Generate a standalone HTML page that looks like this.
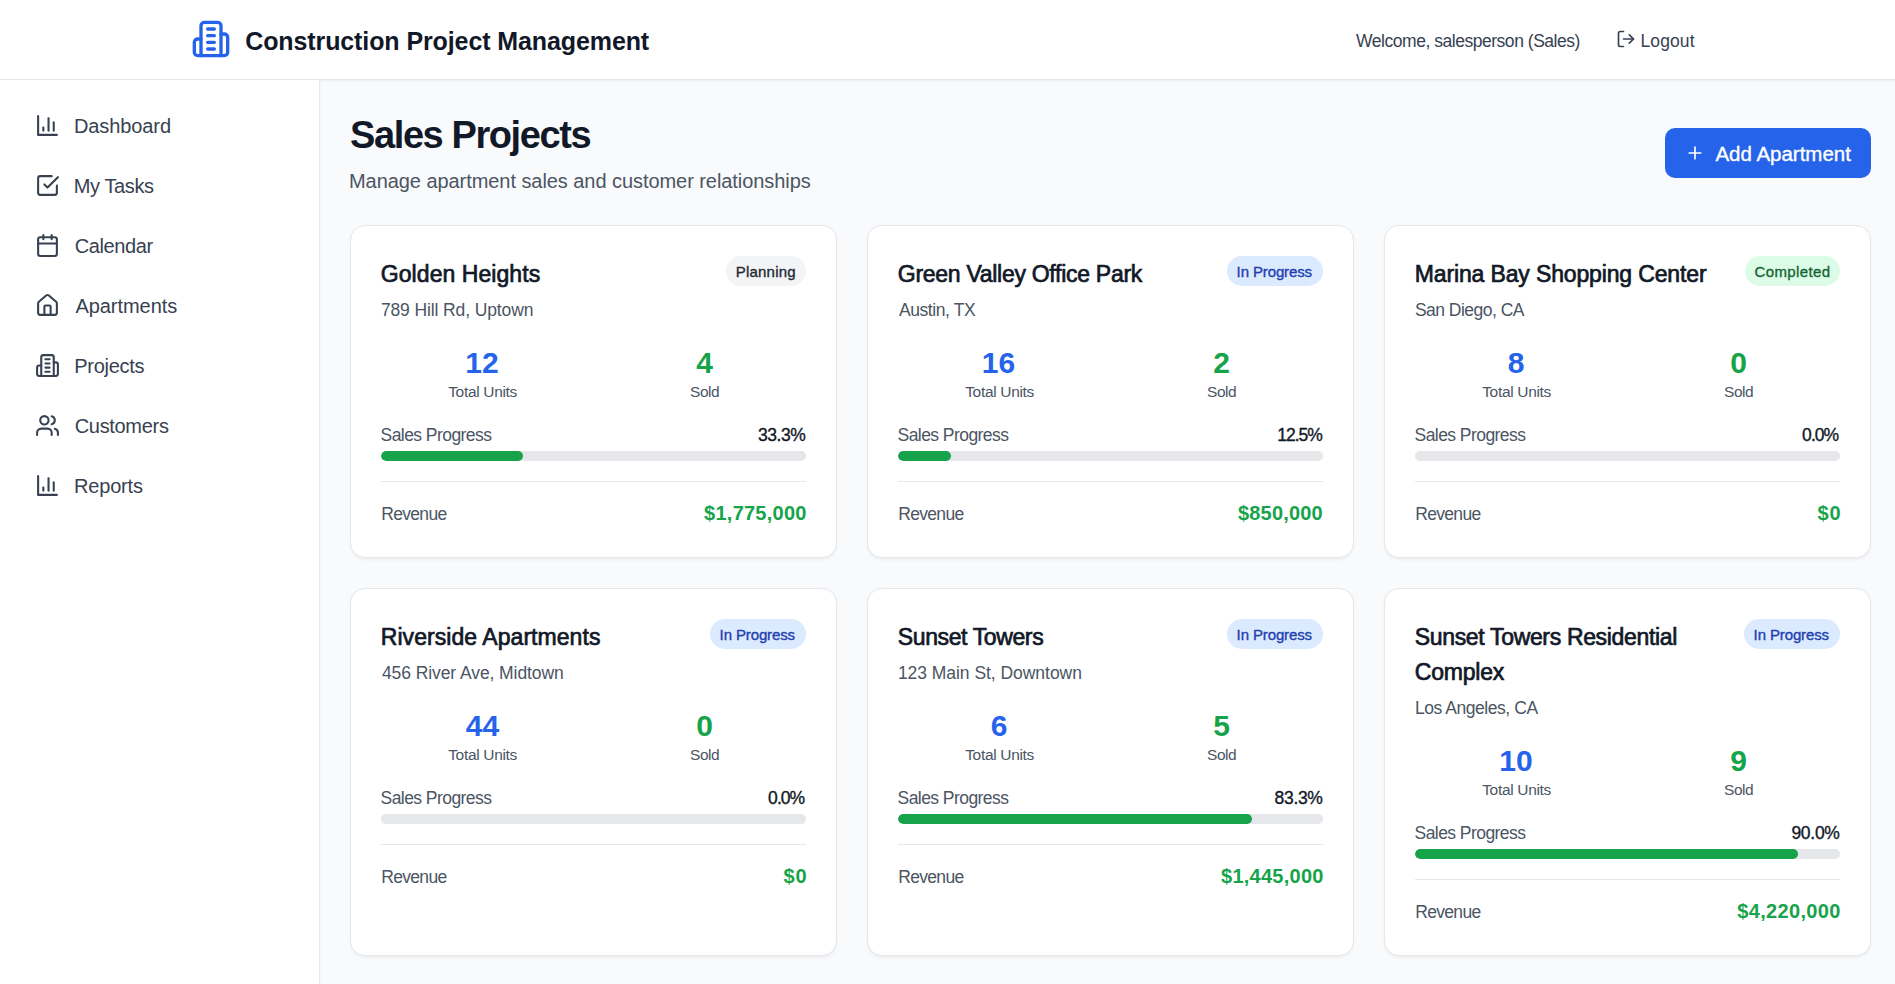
<!DOCTYPE html>
<html><head><meta charset="utf-8"><title>Sales Projects</title>
<style>
*{box-sizing:border-box;margin:0;padding:0}
html,body{width:1895px;height:984px;overflow:hidden;background:#f9fafb;font-family:'Liberation Sans', sans-serif}
.t{position:absolute;white-space:nowrap}
.ic{position:absolute;display:block;overflow:visible}
.b{position:absolute}
</style></head><body>
<div class="b" style="left:0;top:0;width:1895px;height:80px;background:#fff;border-bottom:1px solid #e5e7eb;box-shadow:0 1.25px 2.5px rgba(0,0,0,0.05)"></div>
<div class="b" style="left:0;top:80px;width:320px;height:904px;background:#fff;border-right:1px solid #e5e7eb;box-shadow:0 1.25px 2.5px rgba(0,0,0,0.05)"></div>
<svg class="ic" style="left:190.6px;top:19px;width:40px;height:40px" viewBox="0 0 24 24" fill="none" stroke="#2563eb" stroke-width="2" stroke-linecap="round" stroke-linejoin="round"><path d="M6 22V4a2 2 0 0 1 2-2h8a2 2 0 0 1 2 2v18Z"/><path d="M6 12H4a2 2 0 0 0-2 2v6a2 2 0 0 0 2 2h2"/><path d="M18 9h2a2 2 0 0 1 2 2v9a2 2 0 0 1-2 2h-2"/><path d="M10 6h4"/><path d="M10 10h4"/><path d="M10 14h4"/><path d="M10 18h4"/></svg>
<div class="t" style="left:245.20px;top:29.00px;font-size:25px;line-height:25px;font-weight:700;color:#111827;letter-spacing:-0.100px;">Construction Project Management</div>
<div class="t" style="left:1356.10px;top:33.00px;font-size:17.5px;line-height:17.5px;font-weight:400;color:#374151;letter-spacing:-0.470px;">Welcome, salesperson (Sales)</div>
<svg class="ic" style="left:1616px;top:29px;width:20px;height:20px" viewBox="0 0 24 24" fill="none" stroke="#374151" stroke-width="2" stroke-linecap="round" stroke-linejoin="round"><path d="M9 21H5a2 2 0 0 1-2-2V5a2 2 0 0 1 2-2h4"/><polyline points="16 17 21 12 16 7"/><line x1="21" x2="9" y1="12" y2="12"/></svg>
<div class="t" style="left:1640.50px;top:33.00px;font-size:17.5px;line-height:17.5px;font-weight:400;color:#374151;letter-spacing:0.100px;">Logout</div>
<svg class="ic" style="left:35px;top:113px;width:25px;height:25px" viewBox="0 0 24 24" fill="none" stroke="#374151" stroke-width="2" stroke-linecap="round" stroke-linejoin="round"><path d="M3 3v18h18"/><path d="M18 17V9"/><path d="M13 17V5"/><path d="M8 17v-3"/></svg>
<div class="t" style="left:74.00px;top:116.00px;font-size:20px;line-height:20px;font-weight:400;color:#374151;letter-spacing:-0.100px;">Dashboard</div>
<svg class="ic" style="left:35px;top:173px;width:25px;height:25px" viewBox="0 0 24 24" fill="none" stroke="#374151" stroke-width="2" stroke-linecap="round" stroke-linejoin="round"><polyline points="9 11 12 14 22 4"/><path d="M21 12v7a2 2 0 0 1-2 2H5a2 2 0 0 1-2-2V5a2 2 0 0 1 2-2h11"/></svg>
<div class="t" style="left:73.80px;top:176.00px;font-size:20px;line-height:20px;font-weight:400;color:#374151;letter-spacing:-0.400px;">My Tasks</div>
<svg class="ic" style="left:35px;top:233px;width:25px;height:25px" viewBox="0 0 24 24" fill="none" stroke="#374151" stroke-width="2" stroke-linecap="round" stroke-linejoin="round"><rect width="18" height="18" x="3" y="4" rx="2" ry="2"/><line x1="16" x2="16" y1="2" y2="6"/><line x1="8" x2="8" y1="2" y2="6"/><line x1="3" x2="21" y1="10" y2="10"/></svg>
<div class="t" style="left:74.80px;top:236.00px;font-size:20px;line-height:20px;font-weight:400;color:#374151;letter-spacing:-0.400px;">Calendar</div>
<svg class="ic" style="left:35px;top:293px;width:25px;height:25px" viewBox="0 0 24 24" fill="none" stroke="#374151" stroke-width="2" stroke-linecap="round" stroke-linejoin="round"><path d="M15 21v-8a1 1 0 0 0-1-1h-4a1 1 0 0 0-1 1v8"/><path d="M3 10a2 2 0 0 1 .709-1.528l7-5.999a2 2 0 0 1 2.582 0l7 5.999A2 2 0 0 1 21 10v9a2 2 0 0 1-2 2H5a2 2 0 0 1-2-2z"/></svg>
<div class="t" style="left:75.40px;top:296.00px;font-size:20px;line-height:20px;font-weight:400;color:#374151;letter-spacing:-0.044px;">Apartments</div>
<svg class="ic" style="left:35px;top:353px;width:25px;height:25px" viewBox="0 0 24 24" fill="none" stroke="#374151" stroke-width="2" stroke-linecap="round" stroke-linejoin="round"><path d="M6 22V4a2 2 0 0 1 2-2h8a2 2 0 0 1 2 2v18Z"/><path d="M6 12H4a2 2 0 0 0-2 2v6a2 2 0 0 0 2 2h2"/><path d="M18 9h2a2 2 0 0 1 2 2v9a2 2 0 0 1-2 2h-2"/><path d="M10 6h4"/><path d="M10 10h4"/><path d="M10 14h4"/><path d="M10 18h4"/></svg>
<div class="t" style="left:74.30px;top:356.00px;font-size:20px;line-height:20px;font-weight:400;color:#374151;letter-spacing:-0.286px;">Projects</div>
<svg class="ic" style="left:35px;top:413px;width:25px;height:25px" viewBox="0 0 24 24" fill="none" stroke="#374151" stroke-width="2" stroke-linecap="round" stroke-linejoin="round"><path d="M16 21v-2a4 4 0 0 0-4-4H6a4 4 0 0 0-4 4v2"/><circle cx="9" cy="7" r="4"/><path d="M22 21v-2a4 4 0 0 0-3-3.87"/><path d="M16 3.13a4 4 0 0 1 0 7.75"/></svg>
<div class="t" style="left:74.70px;top:416.00px;font-size:20px;line-height:20px;font-weight:400;color:#374151;letter-spacing:-0.312px;">Customers</div>
<svg class="ic" style="left:35px;top:473px;width:25px;height:25px" viewBox="0 0 24 24" fill="none" stroke="#374151" stroke-width="2" stroke-linecap="round" stroke-linejoin="round"><path d="M3 3v18h18"/><path d="M18 17V9"/><path d="M13 17V5"/><path d="M8 17v-3"/></svg>
<div class="t" style="left:74.00px;top:476.00px;font-size:20px;line-height:20px;font-weight:400;color:#374151;letter-spacing:-0.183px;">Reports</div>
<div class="t" style="left:350.10px;top:116.00px;font-size:38px;line-height:38px;font-weight:700;color:#111827;letter-spacing:-1.415px;">Sales Projects</div>
<div class="t" style="left:349.00px;top:171.00px;font-size:20px;line-height:20px;font-weight:400;color:#4b5563;letter-spacing:-0.060px;">Manage apartment sales and customer relationships</div>
<div class="b" style="left:1665px;top:128px;width:206px;height:50px;background:#2563eb;border-radius:10px"></div>
<svg class="ic" style="left:1685px;top:143px;width:20px;height:20px" viewBox="0 0 24 24" fill="none" stroke="#ffffff" stroke-width="2" stroke-linecap="round" stroke-linejoin="round"><path d="M5 12h14"/><path d="M12 5v14"/></svg>
<div class="t" style="left:1715.40px;top:144.00px;font-size:20.5px;line-height:20.5px;font-weight:400;color:#ffffff;letter-spacing:-0.008px;-webkit-text-stroke:0.35px #ffffff;">Add Apartment</div>
<div class="b" style="left:350px;top:225px;width:487px;height:333px;background:#fff;border:1px solid #e5e7eb;border-radius:15px;box-shadow:0 1.25px 2.5px rgba(0,0,0,0.05)"></div>
<div class="t" style="left:380.80px;top:263.00px;font-size:23px;line-height:23px;font-weight:400;color:#111827;letter-spacing:0.062px;-webkit-text-stroke:0.7px #111827;">Golden Heights</div>
<div class="b" style="left:726px;top:256px;width:80px;height:30px;background:#f3f4f6;border-radius:15px"></div>
<div class="t" style="left:735.85px;top:264.00px;font-size:15px;line-height:15px;font-weight:400;color:#1f2937;letter-spacing:0.186px;-webkit-text-stroke:0.35px #1f2937;">Planning</div>
<div class="t" style="left:380.90px;top:302.00px;font-size:17.5px;line-height:17.5px;font-weight:400;color:#4b5563;letter-spacing:-0.117px;">789 Hill Rd, Uptown</div>
<div class="t" style="left:465.25px;top:348.00px;font-size:30px;line-height:30px;font-weight:700;color:#2563eb;">12</div>
<div class="t" style="left:696.25px;top:348.00px;font-size:30px;line-height:30px;font-weight:700;color:#16a34a;">4</div>
<div class="t" style="left:448.20px;top:384.00px;font-size:15.5px;line-height:15.5px;font-weight:400;color:#4b5563;letter-spacing:-0.320px;">Total Units</div>
<div class="t" style="left:690.05px;top:384.00px;font-size:15.5px;line-height:15.5px;font-weight:400;color:#4b5563;letter-spacing:-0.500px;">Sold</div>
<div class="t" style="left:380.60px;top:427.00px;font-size:17.5px;line-height:17.5px;font-weight:400;color:#4b5563;letter-spacing:-0.562px;">Sales Progress</div>
<div class="t" style="left:758.00px;top:427.00px;font-size:17.5px;line-height:17.5px;font-weight:400;color:#111827;letter-spacing:-0.425px;-webkit-text-stroke:0.35px #111827;">33.3%</div>
<div class="b" style="left:381px;top:451px;width:425px;height:10px;background:#e5e7eb;border-radius:5px;overflow:hidden"><div style="width:33.3%;height:10px;background:#16a34a;border-radius:5px"></div></div>
<div class="b" style="left:381px;top:481px;width:425px;height:1px;background:#e5e7eb"></div>
<div class="t" style="left:381.20px;top:506.00px;font-size:17.5px;line-height:17.5px;font-weight:400;color:#4b5563;letter-spacing:-0.667px;">Revenue</div>
<div class="t" style="left:704.10px;top:503.00px;font-size:20px;line-height:20px;font-weight:700;color:#16a34a;letter-spacing:0.244px;">$1,775,000</div>
<div class="b" style="left:867px;top:225px;width:487px;height:333px;background:#fff;border:1px solid #e5e7eb;border-radius:15px;box-shadow:0 1.25px 2.5px rgba(0,0,0,0.05)"></div>
<div class="t" style="left:897.80px;top:263.00px;font-size:23px;line-height:23px;font-weight:400;color:#111827;letter-spacing:-0.283px;-webkit-text-stroke:0.7px #111827;">Green Valley Office Park</div>
<div class="b" style="left:1227px;top:256px;width:96px;height:30px;background:#dbeafe;border-radius:15px"></div>
<div class="t" style="left:1236.60px;top:264.00px;font-size:15px;line-height:15px;font-weight:400;color:#1e40af;letter-spacing:-0.120px;-webkit-text-stroke:0.35px #1e40af;">In Progress</div>
<div class="t" style="left:898.90px;top:302.00px;font-size:17.5px;line-height:17.5px;font-weight:400;color:#4b5563;letter-spacing:-0.411px;">Austin, TX</div>
<div class="t" style="left:981.75px;top:348.00px;font-size:30px;line-height:30px;font-weight:700;color:#2563eb;">16</div>
<div class="t" style="left:1213.25px;top:348.00px;font-size:30px;line-height:30px;font-weight:700;color:#16a34a;">2</div>
<div class="t" style="left:965.20px;top:384.00px;font-size:15.5px;line-height:15.5px;font-weight:400;color:#4b5563;letter-spacing:-0.320px;">Total Units</div>
<div class="t" style="left:1207.05px;top:384.00px;font-size:15.5px;line-height:15.5px;font-weight:400;color:#4b5563;letter-spacing:-0.500px;">Sold</div>
<div class="t" style="left:897.60px;top:427.00px;font-size:17.5px;line-height:17.5px;font-weight:400;color:#4b5563;letter-spacing:-0.562px;">Sales Progress</div>
<div class="t" style="left:1277.30px;top:427.00px;font-size:17.5px;line-height:17.5px;font-weight:400;color:#111827;letter-spacing:-1.000px;-webkit-text-stroke:0.35px #111827;">12.5%</div>
<div class="b" style="left:898px;top:451px;width:425px;height:10px;background:#e5e7eb;border-radius:5px;overflow:hidden"><div style="width:12.5%;height:10px;background:#16a34a;border-radius:5px"></div></div>
<div class="b" style="left:898px;top:481px;width:425px;height:1px;background:#e5e7eb"></div>
<div class="t" style="left:898.20px;top:506.00px;font-size:17.5px;line-height:17.5px;font-weight:400;color:#4b5563;letter-spacing:-0.667px;">Revenue</div>
<div class="t" style="left:1238.00px;top:503.00px;font-size:20px;line-height:20px;font-weight:700;color:#16a34a;letter-spacing:0.186px;">$850,000</div>
<div class="b" style="left:1384px;top:225px;width:487px;height:333px;background:#fff;border:1px solid #e5e7eb;border-radius:15px;box-shadow:0 1.25px 2.5px rgba(0,0,0,0.05)"></div>
<div class="t" style="left:1414.80px;top:263.00px;font-size:23px;line-height:23px;font-weight:400;color:#111827;letter-spacing:-0.144px;-webkit-text-stroke:0.7px #111827;">Marina Bay Shopping Center</div>
<div class="b" style="left:1745px;top:256px;width:95px;height:30px;background:#dcfce7;border-radius:15px"></div>
<div class="t" style="left:1754.45px;top:264.00px;font-size:15px;line-height:15px;font-weight:400;color:#166534;letter-spacing:0.387px;-webkit-text-stroke:0.35px #166534;">Completed</div>
<div class="t" style="left:1414.90px;top:302.00px;font-size:17.5px;line-height:17.5px;font-weight:400;color:#4b5563;letter-spacing:-0.517px;">San Diego, CA</div>
<div class="t" style="left:1507.75px;top:348.00px;font-size:30px;line-height:30px;font-weight:700;color:#2563eb;">8</div>
<div class="t" style="left:1730.25px;top:348.00px;font-size:30px;line-height:30px;font-weight:700;color:#16a34a;">0</div>
<div class="t" style="left:1482.20px;top:384.00px;font-size:15.5px;line-height:15.5px;font-weight:400;color:#4b5563;letter-spacing:-0.320px;">Total Units</div>
<div class="t" style="left:1724.05px;top:384.00px;font-size:15.5px;line-height:15.5px;font-weight:400;color:#4b5563;letter-spacing:-0.500px;">Sold</div>
<div class="t" style="left:1414.60px;top:427.00px;font-size:17.5px;line-height:17.5px;font-weight:400;color:#4b5563;letter-spacing:-0.562px;">Sales Progress</div>
<div class="t" style="left:1802.10px;top:427.00px;font-size:17.5px;line-height:17.5px;font-weight:400;color:#111827;letter-spacing:-0.933px;-webkit-text-stroke:0.35px #111827;">0.0%</div>
<div class="b" style="left:1415px;top:451px;width:425px;height:10px;background:#e5e7eb;border-radius:5px;overflow:hidden"></div>
<div class="b" style="left:1415px;top:481px;width:425px;height:1px;background:#e5e7eb"></div>
<div class="t" style="left:1415.20px;top:506.00px;font-size:17.5px;line-height:17.5px;font-weight:400;color:#4b5563;letter-spacing:-0.667px;">Revenue</div>
<div class="t" style="left:1817.50px;top:503.00px;font-size:20px;line-height:20px;font-weight:700;color:#16a34a;letter-spacing:0.800px;">$0</div>
<div class="b" style="left:350px;top:588px;width:487px;height:368px;background:#fff;border:1px solid #e5e7eb;border-radius:15px;box-shadow:0 1.25px 2.5px rgba(0,0,0,0.05)"></div>
<div class="t" style="left:380.80px;top:626.00px;font-size:23px;line-height:23px;font-weight:400;color:#111827;letter-spacing:0.053px;-webkit-text-stroke:0.7px #111827;">Riverside Apartments</div>
<div class="b" style="left:710px;top:619px;width:96px;height:30px;background:#dbeafe;border-radius:15px"></div>
<div class="t" style="left:719.60px;top:627.00px;font-size:15px;line-height:15px;font-weight:400;color:#1e40af;letter-spacing:-0.120px;-webkit-text-stroke:0.35px #1e40af;">In Progress</div>
<div class="t" style="left:381.90px;top:665.00px;font-size:17.5px;line-height:17.5px;font-weight:400;color:#4b5563;letter-spacing:-0.076px;">456 River Ave, Midtown</div>
<div class="t" style="left:465.75px;top:711.00px;font-size:30px;line-height:30px;font-weight:700;color:#2563eb;">44</div>
<div class="t" style="left:696.25px;top:711.00px;font-size:30px;line-height:30px;font-weight:700;color:#16a34a;">0</div>
<div class="t" style="left:448.20px;top:747.00px;font-size:15.5px;line-height:15.5px;font-weight:400;color:#4b5563;letter-spacing:-0.320px;">Total Units</div>
<div class="t" style="left:690.05px;top:747.00px;font-size:15.5px;line-height:15.5px;font-weight:400;color:#4b5563;letter-spacing:-0.500px;">Sold</div>
<div class="t" style="left:380.60px;top:790.00px;font-size:17.5px;line-height:17.5px;font-weight:400;color:#4b5563;letter-spacing:-0.562px;">Sales Progress</div>
<div class="t" style="left:768.10px;top:790.00px;font-size:17.5px;line-height:17.5px;font-weight:400;color:#111827;letter-spacing:-0.933px;-webkit-text-stroke:0.35px #111827;">0.0%</div>
<div class="b" style="left:381px;top:814px;width:425px;height:10px;background:#e5e7eb;border-radius:5px;overflow:hidden"></div>
<div class="b" style="left:381px;top:844px;width:425px;height:1px;background:#e5e7eb"></div>
<div class="t" style="left:381.20px;top:869.00px;font-size:17.5px;line-height:17.5px;font-weight:400;color:#4b5563;letter-spacing:-0.667px;">Revenue</div>
<div class="t" style="left:783.50px;top:866.00px;font-size:20px;line-height:20px;font-weight:700;color:#16a34a;letter-spacing:0.800px;">$0</div>
<div class="b" style="left:867px;top:588px;width:487px;height:368px;background:#fff;border:1px solid #e5e7eb;border-radius:15px;box-shadow:0 1.25px 2.5px rgba(0,0,0,0.05)"></div>
<div class="t" style="left:897.80px;top:626.00px;font-size:23px;line-height:23px;font-weight:400;color:#111827;letter-spacing:-0.383px;-webkit-text-stroke:0.7px #111827;">Sunset Towers</div>
<div class="b" style="left:1227px;top:619px;width:96px;height:30px;background:#dbeafe;border-radius:15px"></div>
<div class="t" style="left:1236.60px;top:627.00px;font-size:15px;line-height:15px;font-weight:400;color:#1e40af;letter-spacing:-0.120px;-webkit-text-stroke:0.35px #1e40af;">In Progress</div>
<div class="t" style="left:897.90px;top:665.00px;font-size:17.5px;line-height:17.5px;font-weight:400;color:#4b5563;letter-spacing:-0.040px;">123 Main St, Downtown</div>
<div class="t" style="left:990.75px;top:711.00px;font-size:30px;line-height:30px;font-weight:700;color:#2563eb;">6</div>
<div class="t" style="left:1213.25px;top:711.00px;font-size:30px;line-height:30px;font-weight:700;color:#16a34a;">5</div>
<div class="t" style="left:965.20px;top:747.00px;font-size:15.5px;line-height:15.5px;font-weight:400;color:#4b5563;letter-spacing:-0.320px;">Total Units</div>
<div class="t" style="left:1207.05px;top:747.00px;font-size:15.5px;line-height:15.5px;font-weight:400;color:#4b5563;letter-spacing:-0.500px;">Sold</div>
<div class="t" style="left:897.60px;top:790.00px;font-size:17.5px;line-height:17.5px;font-weight:400;color:#4b5563;letter-spacing:-0.562px;">Sales Progress</div>
<div class="t" style="left:1274.60px;top:790.00px;font-size:17.5px;line-height:17.5px;font-weight:400;color:#111827;letter-spacing:-0.325px;-webkit-text-stroke:0.35px #111827;">83.3%</div>
<div class="b" style="left:898px;top:814px;width:425px;height:10px;background:#e5e7eb;border-radius:5px;overflow:hidden"><div style="width:83.3%;height:10px;background:#16a34a;border-radius:5px"></div></div>
<div class="b" style="left:898px;top:844px;width:425px;height:1px;background:#e5e7eb"></div>
<div class="t" style="left:898.20px;top:869.00px;font-size:17.5px;line-height:17.5px;font-weight:400;color:#4b5563;letter-spacing:-0.667px;">Revenue</div>
<div class="t" style="left:1221.00px;top:866.00px;font-size:20px;line-height:20px;font-weight:700;color:#16a34a;letter-spacing:0.256px;">$1,445,000</div>
<div class="b" style="left:1384px;top:588px;width:487px;height:368px;background:#fff;border:1px solid #e5e7eb;border-radius:15px;box-shadow:0 1.25px 2.5px rgba(0,0,0,0.05)"></div>
<div class="t" style="left:1414.80px;top:626.00px;font-size:23px;line-height:23px;font-weight:400;color:#111827;letter-spacing:-0.338px;-webkit-text-stroke:0.7px #111827;">Sunset Towers Residential</div>
<div class="t" style="left:1414.80px;top:661.00px;font-size:23px;line-height:23px;font-weight:400;color:#111827;letter-spacing:-0.217px;-webkit-text-stroke:0.7px #111827;">Complex</div>
<div class="b" style="left:1744px;top:619px;width:96px;height:30px;background:#dbeafe;border-radius:15px"></div>
<div class="t" style="left:1753.60px;top:627.00px;font-size:15px;line-height:15px;font-weight:400;color:#1e40af;letter-spacing:-0.120px;-webkit-text-stroke:0.35px #1e40af;">In Progress</div>
<div class="t" style="left:1414.90px;top:700.00px;font-size:17.5px;line-height:17.5px;font-weight:400;color:#4b5563;letter-spacing:-0.443px;">Los Angeles, CA</div>
<div class="t" style="left:1499.25px;top:746.00px;font-size:30px;line-height:30px;font-weight:700;color:#2563eb;">10</div>
<div class="t" style="left:1730.25px;top:746.00px;font-size:30px;line-height:30px;font-weight:700;color:#16a34a;">9</div>
<div class="t" style="left:1482.20px;top:782.00px;font-size:15.5px;line-height:15.5px;font-weight:400;color:#4b5563;letter-spacing:-0.320px;">Total Units</div>
<div class="t" style="left:1724.05px;top:782.00px;font-size:15.5px;line-height:15.5px;font-weight:400;color:#4b5563;letter-spacing:-0.500px;">Sold</div>
<div class="t" style="left:1414.60px;top:825.00px;font-size:17.5px;line-height:17.5px;font-weight:400;color:#4b5563;letter-spacing:-0.562px;">Sales Progress</div>
<div class="t" style="left:1791.40px;top:825.00px;font-size:17.5px;line-height:17.5px;font-weight:400;color:#111827;letter-spacing:-0.275px;-webkit-text-stroke:0.35px #111827;">90.0%</div>
<div class="b" style="left:1415px;top:849px;width:425px;height:10px;background:#e5e7eb;border-radius:5px;overflow:hidden"><div style="width:90.0%;height:10px;background:#16a34a;border-radius:5px"></div></div>
<div class="b" style="left:1415px;top:879px;width:425px;height:1px;background:#e5e7eb"></div>
<div class="t" style="left:1415.20px;top:904.00px;font-size:17.5px;line-height:17.5px;font-weight:400;color:#4b5563;letter-spacing:-0.667px;">Revenue</div>
<div class="t" style="left:1737.30px;top:901.00px;font-size:20px;line-height:20px;font-weight:700;color:#16a34a;letter-spacing:0.333px;">$4,220,000</div>
</body></html>
